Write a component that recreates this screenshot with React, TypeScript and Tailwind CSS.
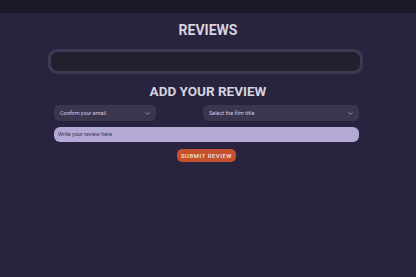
import { ChevronDown } from 'lucide-react';

export default function App() {
  return (
    <div className="min-h-[277px] w-full bg-[#28233f] font-['Roboto',sans-serif] text-[#dedbe8]">
      {/* top nav strip */}
      <div className="h-[13px] bg-[#1b1929]"></div>

      <h1 className="mt-[8px] text-center text-[14px] font-bold leading-[18px] text-[#d6d3de]">REVIEWS</h1>

      {/* reviews list (empty) */}
      <div className="mx-[48px] mt-[10px] mr-[53px] h-[25px] rounded-[9px] bg-[#3c3953] p-[3px]">
        <div className="h-full w-full rounded-[7px] bg-[#22202e]"></div>
      </div>

      <h2 className="mt-[8px] text-center text-[13.5px] font-bold leading-[18px] text-[#d6d3de]">ADD YOUR REVIEW</h2>

      <form className="ml-[54px] mr-[57px] mt-[5px] flex flex-col">
        <div className="flex justify-between">
          <div className="flex h-[16px] w-[102px] items-center justify-between rounded-[5px] bg-[#3a3650] pl-[6px] pr-[5px] text-[5.5px] text-[#cfcbe0]">
            <span>Confirm your email</span>
            <ChevronDown size={7} strokeWidth={2.5} className="text-[#bdb8d0]" />
          </div>
          <div className="flex h-[16px] w-[156px] items-center justify-between rounded-[5px] bg-[#3a3650] pl-[6px] pr-[5px] text-[5.5px] text-[#cfcbe0]">
            <span>Select the film title</span>
            <ChevronDown size={7} strokeWidth={2.5} className="text-[#bdb8d0]" />
          </div>
        </div>

        <div className="mt-[6px] flex h-[15px] items-center rounded-[6px] bg-[#b4a8d4] pl-[4px] text-[5.5px] text-[#3d3556]">
          Write your review here
        </div>

        <div className="mt-[7px] flex justify-center">
          <button type="button" className="h-[13px] w-[59px] rounded-[5px] bg-[#c5502d] text-[6px] font-medium tracking-[0.5px] text-[#f3e3dc]">
            SUBMIT REVIEW
          </button>
        </div>
      </form>
    </div>
  );
}
